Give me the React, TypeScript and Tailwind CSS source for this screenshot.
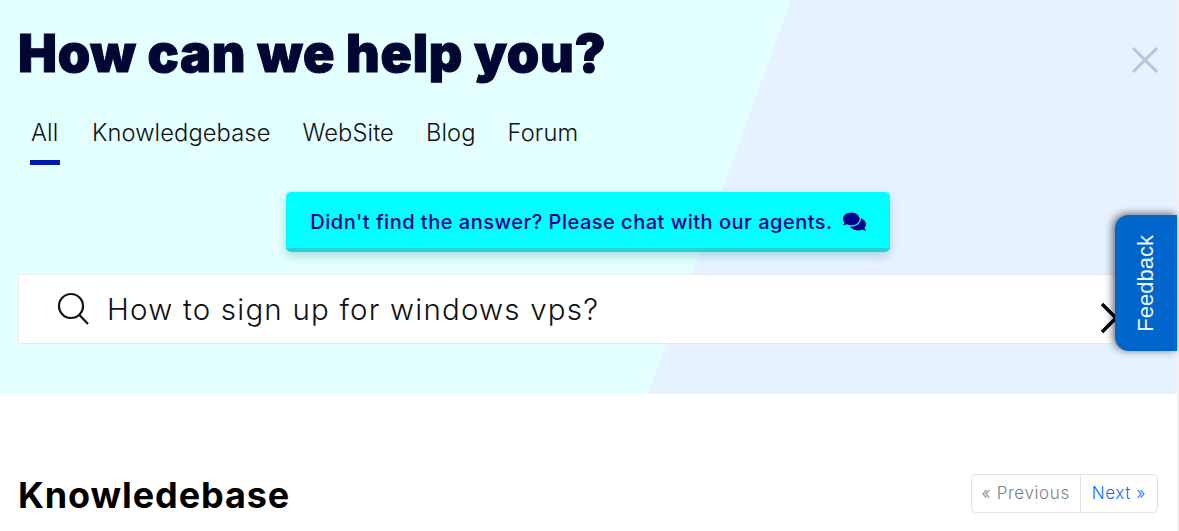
import { FaComments } from "react-icons/fa";

const tabs = ["All", "Knowledgebase", "WebSite", "Blog", "Forum"];

export default function App() {
  return (
    <div className="flex h-[531px] w-full overflow-hidden bg-white font-['Inter',sans-serif]">
      <main className="relative min-w-0 flex-1">
        <section className="relative h-[394px] bg-[#e4ffff] pt-[24px]">
          <div className="absolute inset-0 bg-[#e6f2ff] [clip-path:polygon(791px_0,100%_0,100%_100%,648px_100%)]" />
          <div className="relative">
            <div className="flex items-start justify-between pl-[18px] pr-[18px]">
              <h1 className="text-[52px] leading-[60px] font-black tracking-[0.65px] text-[#020633] [-webkit-text-stroke:1px_#020633]">
                How can we help you?
              </h1>
              <svg className="mt-[22px]" width="28" height="28" viewBox="0 0 28 28" fill="none">
                <path d="M2 2 L26 26 M26 2 L2 26" stroke="#b7c6d4" strokeWidth="3" />
              </svg>
            </div>
            <nav className="mt-[27px] flex gap-[32px] pl-[30px]">
              {tabs.map((tab, i) => (
                <div
                  key={tab}
                  className={
                    i === 0
                      ? "h-[54px] w-[30px] border-b-[5px] border-[#0019b0] pl-px pt-[7px] text-[23.7px] leading-[30px] font-light tracking-[0.1px] text-[#111]"
                      : "h-[54px] pt-[7px] text-[23.7px] leading-[30px] font-light tracking-[0.1px] text-[#111]"
                  }
                >
                  {tab}
                </div>
              ))}
            </nav>
            <div className="mt-[27px] flex justify-center pr-px">
              <button className="flex h-[60px] w-[604px] items-center justify-center gap-[10px] rounded-[5px] border-b-[4px] border-[#1cd6d6] bg-[#00ffff] pt-[3px] text-[20px] font-medium tracking-[0.5px] text-[#00008b] shadow-[0_4px_10px_rgba(0,120,140,0.25)]">
                Didn't find the answer? Please chat with our agents.
                <FaComments className="text-[23px]" />
              </button>
            </div>
            <div className="mx-[18px] mt-[22px] flex h-[70px] items-center justify-between border border-[#e8eaed] bg-white pl-[37px] pr-[40px]">
              <div className="flex items-center gap-[17px]">
                <svg width="34" height="34" viewBox="0 0 34 34" fill="none" stroke="#111" strokeWidth="2.2">
                  <circle cx="15" cy="14" r="12" />
                  <path d="M23.5 23 L32 32" />
                </svg>
                <span className="text-[29.5px] font-light tracking-[1.2px] text-[#111]">
                  How to sign up for windows vps?
                </span>
              </div>
              <svg className="mt-[17px]" width="18" height="32" viewBox="0 0 18 32" fill="none" stroke="#000" strokeWidth="3.5">
                <path d="M2 2 L16 16 L2 30" />
              </svg>
            </div>
          </div>
        </section>
        <section className="flex items-start justify-between pl-[18px] pr-[19px] pt-[78px]">
          <h2 className="text-[36px] leading-[46px] font-bold tracking-[0.9px] text-black">Knowledebase</h2>
          <div className="mt-[2px] flex h-[39px] rounded-[5px] border border-[#dee2e6] text-[17px] font-light tracking-[0.6px]">
            <span className="flex items-center border-r border-[#dee2e6] px-[10px] text-[#808080]">« Previous</span>
            <span className="flex items-center px-[11px] text-[#0d6efd]">Next »</span>
          </div>
        </section>
        <div className="absolute right-0 top-[215px] flex h-[136px] w-[62px] items-center justify-center rounded-l-[14px] bg-[#0066cc] pr-px shadow-[-2px_-1px_8px_rgba(0,0,0,0.6)]">
          <span className="rotate-180 font-['Liberation_Sans',sans-serif] text-[22px] text-[#f0f6ff] [writing-mode:vertical-rl]">
            Feedback
          </span>
        </div>
      </main>
      <div className="w-[2px] bg-[#f1f1f1]" />
    </div>
  );
}
